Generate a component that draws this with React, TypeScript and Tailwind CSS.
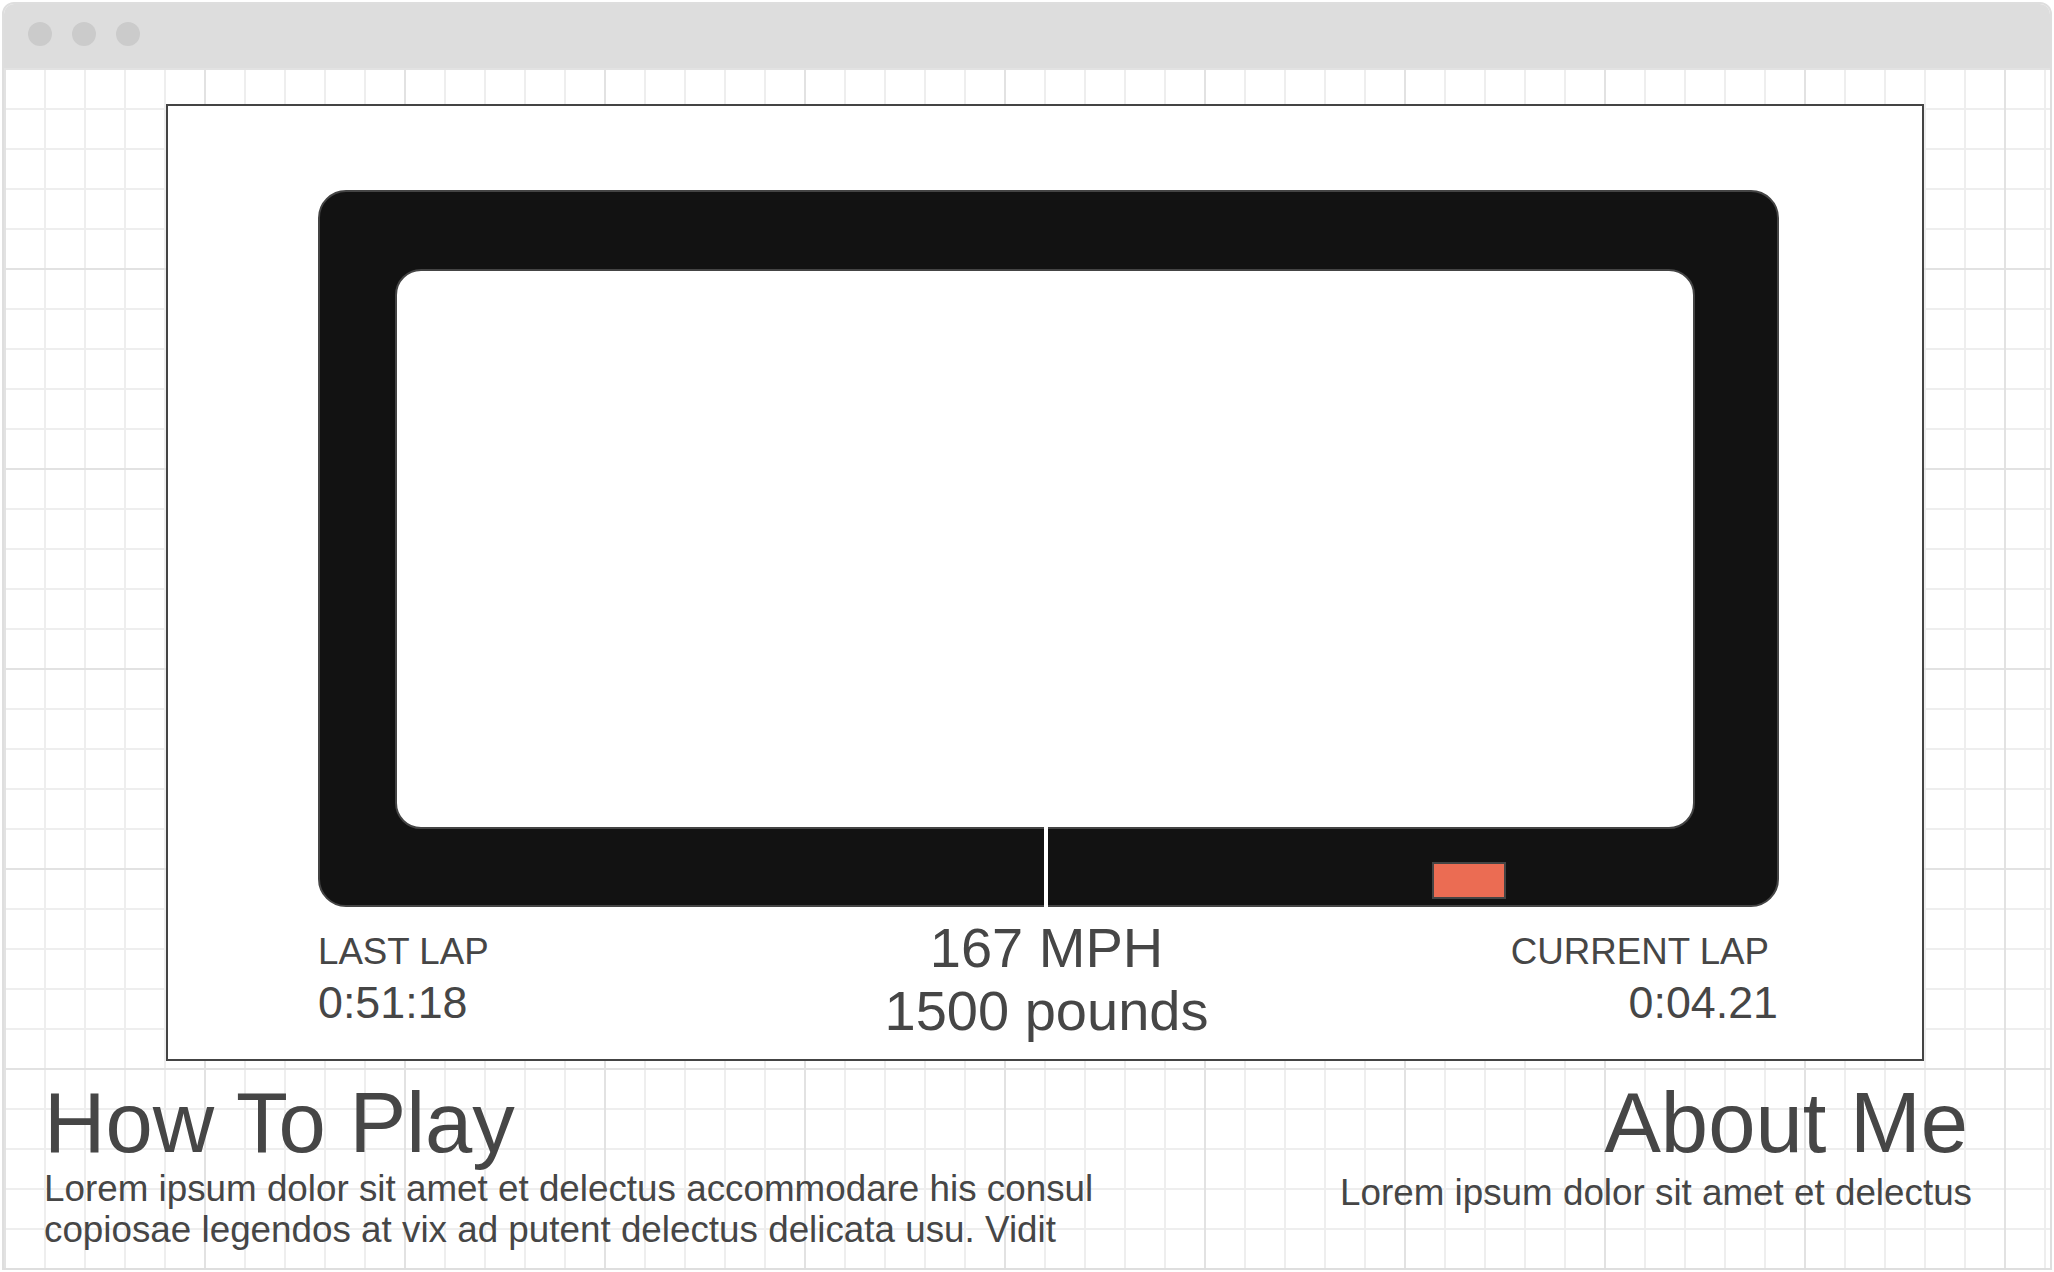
import React from 'react';

const gridBg =
  '[background-image:linear-gradient(to_right,#e2e2e2_2px,transparent_2px),linear-gradient(to_bottom,#e2e2e2_2px,transparent_2px),linear-gradient(to_right,#eeeeee_2px,transparent_2px),linear-gradient(to_bottom,#eeeeee_2px,transparent_2px)] [background-size:200px_200px,200px_200px,40px_40px,40px_40px]';

function Track() {
  return (
    <div className="relative w-[1461px] h-[717px] rounded-[28px] bg-[#121212] border-2 border-[#444] pt-[77px] pl-[75px] pr-[82px] pb-[76px]">
      <div className="w-full h-full rounded-[26px] bg-white border-2 border-[#444]" />
      {/* finish line */}
      <div className="absolute left-[724px] top-[635px] bottom-[-2px] w-[4px] bg-white" />
      {/* car */}
      <div className="absolute left-[1112px] top-[670px] w-[74px] h-[37px] bg-[#eb6c53] border-2 border-[#444]" />
    </div>
  );
}

function Stats() {
  return (
    <div className="w-[1461px] grid grid-cols-[1fr_auto_1fr] items-start mt-[9px]">
      <div className="pt-[18px]">
        <div className="text-[36.7px] leading-[36px]">LAST LAP</div>
        <div className="text-[44.8px] leading-[44px] mt-[10px]">0:51:18</div>
      </div>
      <div className="text-center text-[56px] leading-[63px] -translate-x-[2px]">
        <div>167 MPH</div>
        <div>1500 pounds</div>
      </div>
      <div className="pt-[18px] text-right">
        <div className="text-[36.7px] leading-[36px] pr-[10px]">CURRENT LAP</div>
        <div className="text-[44.8px] leading-[44px] mt-[10px] pr-[1px]">0:04.21</div>
      </div>
    </div>
  );
}

export default function App() {
  return (
    <div className="w-[2054px] h-[1272px] bg-white p-[2px] font-['Liberation_Sans',Arial,sans-serif] text-[#464646]">
      <div className="flex flex-col h-full border-2 border-[#dedede] rounded-t-[12px] overflow-hidden">
        {/* title bar */}
        <div className="h-[64px] bg-[#dddddd] flex items-start gap-[20px] pl-[24px] pt-[18px]">
          <div className="w-6 h-6 rounded-full bg-[#cbcbcb]" />
          <div className="w-6 h-6 rounded-full bg-[#cbcbcb]" />
          <div className="w-6 h-6 rounded-full bg-[#cbcbcb]" />
        </div>

        {/* canvas */}
        <div className={`flex-1 bg-white ${gridBg}`}>
          <div className="ml-[162px] mt-[36px] w-[1758px] h-[957px] border-2 border-[#444] bg-white pt-[84px] pl-[150px]">
            <Track />
            <Stats />
          </div>

          <div className="flex justify-between items-start pl-[40px] pr-[82px] pt-[20px]">
            <div>
              <h1 className="text-[85px] leading-[84px]">How To Play</h1>
              <p className="text-[36.8px] leading-[41px] mt-[3px] w-[1080px]">
                Lorem ipsum dolor sit amet et delectus accommodare his consul copiosae legendos at vix ad putent delectus delicata usu. Vidit
              </p>
            </div>
            <div className="text-right">
              <h1 className="text-[85px] leading-[84px]">About Me</h1>
              <p className="text-[36.8px] leading-[41px] mt-[7px] -mr-[4px]">Lorem ipsum dolor sit amet et delectus</p>
            </div>
          </div>
        </div>
      </div>
    </div>
  );
}
